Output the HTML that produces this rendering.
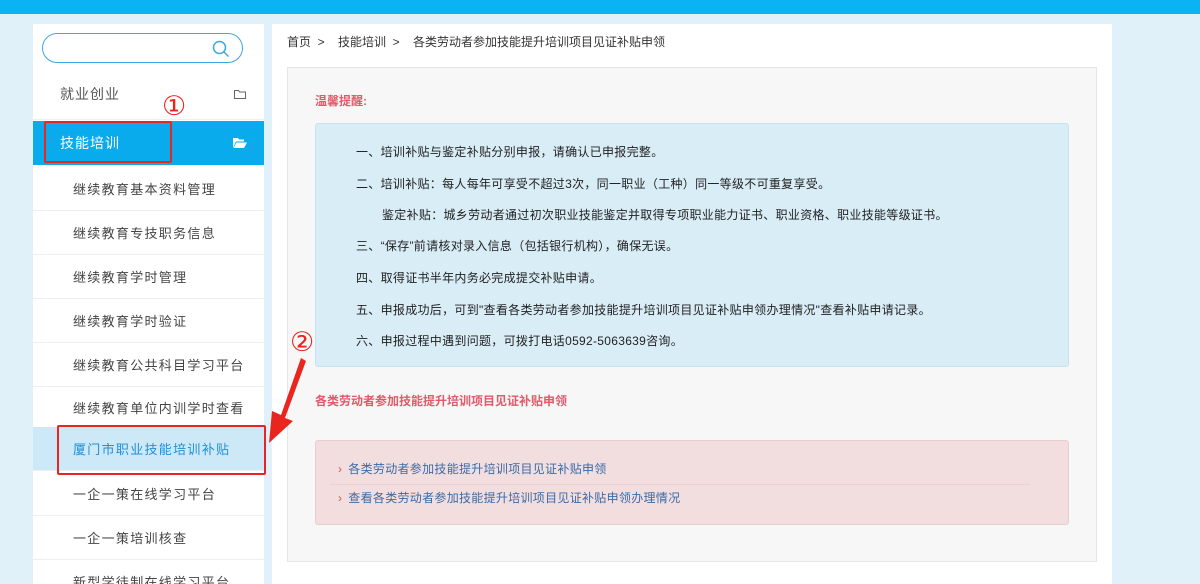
<!DOCTYPE html>
<html><head><meta charset="utf-8"><style>
*{margin:0;padding:0;box-sizing:border-box}
html,body{width:1200px;height:584px;overflow:hidden}
body{background:#e1f1fa;font-family:"Liberation Sans","Noto Sans CJK SC",sans-serif;position:relative;font-size:13px;color:#333}
.top{position:absolute;left:0;top:0;width:1200px;height:14px;background:#0bb3f5}
.side{position:absolute;left:33px;top:24px;width:231px;height:560px;background:#fff;overflow:hidden}
.search{position:absolute;left:9px;top:9px;width:201px;height:30px;border:1px solid #3aa9e0;border-radius:15px}
.row{position:absolute;left:0;width:231px;border-bottom:1px solid #eee;font-size:14px;color:#555}
.sub{position:absolute;left:0;width:231px;height:44px;border-bottom:1px solid #eee;padding-left:40px;line-height:45px;font-size:13px;color:#444;letter-spacing:1.3px}
.main{position:absolute;left:272px;top:24px;width:840px;height:560px;background:#fff}
.crumb{position:absolute;left:287px;top:33px;font-size:12px;color:#333}
.gray{position:absolute;left:287px;top:67px;width:810px;height:495px;background:#f7f7f7;border:1px solid #e6e6e6}
.info{position:absolute;left:315px;top:123px;width:754px;height:244px;background:#d9edf7;border:1px solid #c4e3f0;border-radius:3px}
.info p{position:absolute;left:40px;font-size:12px;color:#222;letter-spacing:0.3px}
.pink{position:absolute;left:315px;top:440px;width:754px;height:85px;background:#f2dede;border:1px solid #ebccd1;border-radius:3px}
.pink p{position:absolute;left:22px;font-size:12px;color:#3a6aa8;letter-spacing:0.3px}
.pink span{color:#d9534f;margin-right:6px}
.redbox{position:absolute;border:2px solid #e8261f;border-radius:2px}
.num{position:absolute;font-size:27px;line-height:27px;color:#e8261f;font-family:"DejaVu Sans",sans-serif}
</style></head><body>
<div class="top"></div>
<div class="side">
 <div class="search"><svg style="position:absolute;right:12px;top:6px" width="18" height="18" viewBox="0 0 18 18"><circle cx="7.5" cy="7.5" r="6" fill="none" stroke="#3aa9e0" stroke-width="1.5"/><path d="M12 12l4.5 4.5" stroke="#3aa9e0" stroke-width="1.5"/></svg></div>
 <div class="row" style="top:46px;height:50px;line-height:48px;padding-left:27px;letter-spacing:1px">就业创业<svg style="position:absolute;right:18px;top:19px" width="12" height="10" viewBox="0 0 12 10"><path d="M0.5 1.5h4l1 1.5h6v6.5h-11z" fill="none" stroke="#666"/></svg></div>
 <div class="row" style="top:97px;height:44px;line-height:44px;padding-left:27px;background:#0aabed;color:#fff;border:none;letter-spacing:1px">技能培训<svg style="position:absolute;right:17px;top:17px" width="14" height="10" viewBox="0 0 14 10"><path d="M0 0h5l1 1.5h5v2H3L0 10z M3.5 4.5H14L11 10H0.5z" fill="#fff"/></svg></div>
 <div class="sub" style="top:143px">继续教育基本资料管理</div>
 <div class="sub" style="top:187px">继续教育专技职务信息</div>
 <div class="sub" style="top:231px">继续教育学时管理</div>
 <div class="sub" style="top:275px">继续教育学时验证</div>
 <div class="sub" style="top:319px">继续教育公共科目学习平台</div>
 <div class="sub" style="top:362px">继续教育单位内训学时查看</div>
 <div class="sub" style="top:403px;height:44px;background:#cde9f8;color:#1f8fd6">厦门市职业技能培训补贴</div>
 <div class="sub" style="top:448px">一企一策在线学习平台</div>
 <div class="sub" style="top:492px">一企一策培训核查</div>
 <div class="sub" style="top:536px">新型学徒制在线学习平台</div>
</div>
<div class="main"></div>
<div class="crumb">首页 &nbsp;&gt; &nbsp;&nbsp; 技能培训 &nbsp;&gt; &nbsp;&nbsp; 各类劳动者参加技能提升培训项目见证补贴申领</div>
<div class="gray"></div>
<div style="position:absolute;left:315px;top:92px;font-size:12px;font-weight:bold;color:#e05a6a">温馨提醒:</div>
<div class="info">
 <p style="top:19px">一、培训补贴与鉴定补贴分别申报，请确认已申报完整。</p>
 <p style="top:51px">二、培训补贴：每人每年可享受不超过3次，同一职业（工种）同一等级不可重复享受。</p>
 <p style="top:82px;left:66px">鉴定补贴：城乡劳动者通过初次职业技能鉴定并取得专项职业能力证书、职业资格、职业技能等级证书。</p>
 <p style="top:113px">三、“保存”前请核对录入信息（包括银行机构），确保无误。</p>
 <p style="top:145px">四、取得证书半年内务必完成提交补贴申请。</p>
 <p style="top:177px">五、申报成功后，可到"查看各类劳动者参加技能提升培训项目见证补贴申领办理情况"查看补贴申请记录。</p>
 <p style="top:208px">六、申报过程中遇到问题，可拨打电话0592-5063639咨询。</p>
</div>
<div style="position:absolute;left:315px;top:392px;font-size:12px;font-weight:bold;color:#e05a6a">各类劳动者参加技能提升培训项目见证补贴申领</div>
<div class="pink">
 <p style="top:19px"><span>›</span>各类劳动者参加技能提升培训项目见证补贴申领</p>
 <div style="position:absolute;left:14px;top:43px;width:700px;border-top:1px solid #e9d2d2"></div>
 <p style="top:48px"><span>›</span>查看各类劳动者参加技能提升培训项目见证补贴申领办理情况</p>
</div>
<div class="redbox" style="left:44px;top:121px;width:128px;height:42px"></div>
<div class="num" style="left:162px;top:93px">①</div>
<div class="redbox" style="left:57px;top:425px;width:209px;height:50px"></div>
<div class="num" style="left:290px;top:329px">②</div>
<svg style="position:absolute;left:260px;top:355px" width="50" height="95" viewBox="0 0 50 95"><path d="M41 3 L21 60 L12 56 L9 88 L33 66 L25 63 L46 6z" fill="#e8261f"/></svg>
</body></html>
